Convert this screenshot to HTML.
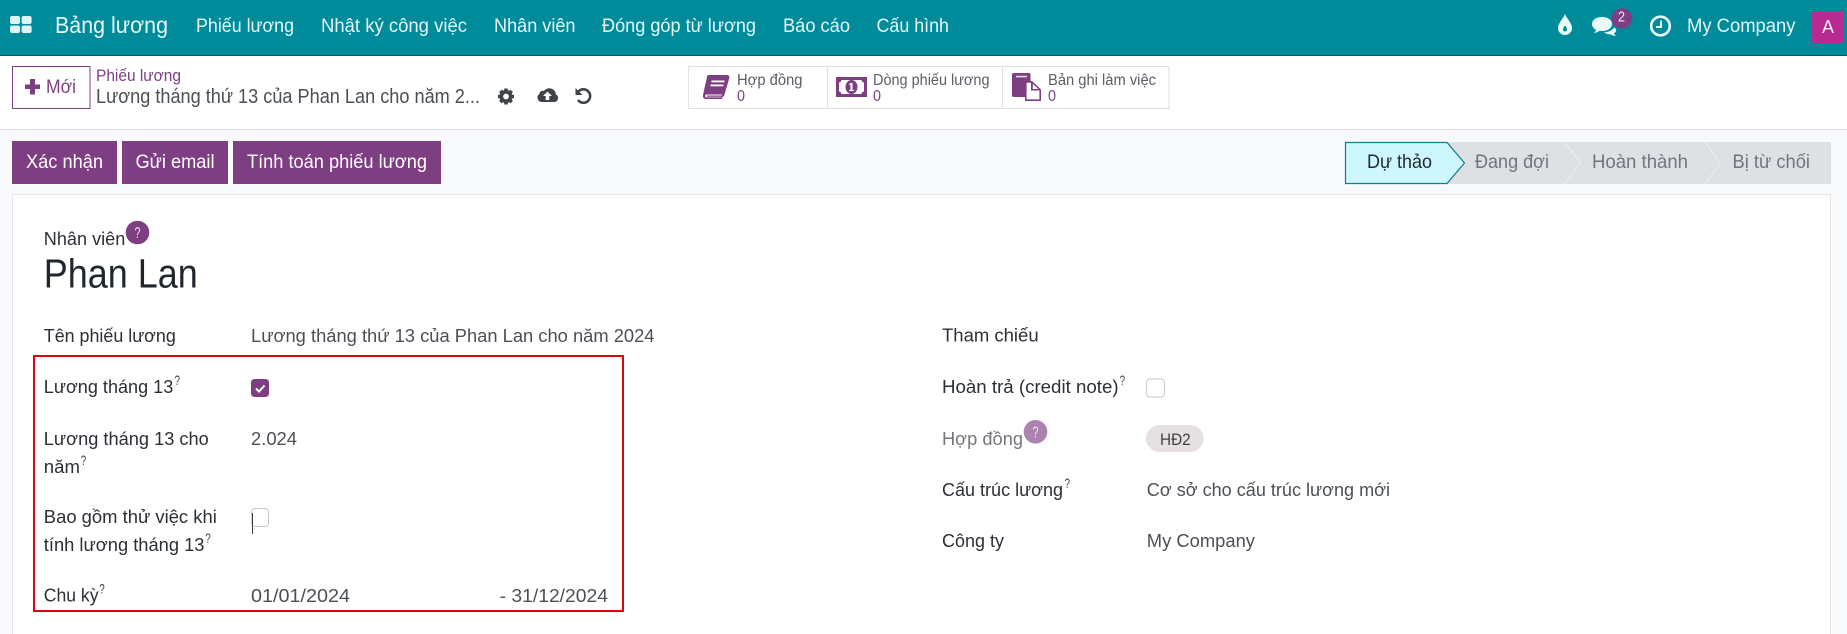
<!DOCTYPE html>
<html lang="vi">
<head>
<meta charset="utf-8">
<title>Bảng lương</title>
<style>
html,body{margin:0;padding:0;width:1847px;height:634px;overflow:hidden;background:#fff}
svg{display:block}
text{font-family:"Liberation Sans",Arimo,sans-serif;font-size:18.5px;fill:#2f343a;white-space:pre}
.nav{fill:#e6f6f7;font-size:19.5px}
.lab{fill:#2b3036}
.val{fill:#4b5057}
.btn{fill:#fff;font-size:19.5px}
.sup{font-size:14px;fill:#3d4248}
.st{font-size:15.5px;fill:#5a5f66}
.sn{font-size:16px;fill:#7d3f82}
.sb{fill:#6f7680;font-size:19.5px}
</style>
</head>
<body>
<svg xmlns="http://www.w3.org/2000/svg" width="1847" height="634" viewBox="0 0 1847 634">
<!-- backgrounds -->
<rect width="1847" height="634" fill="#f8f9fa"/>
<rect y="55" width="1847" height="74" fill="#fff"/>
<rect y="129" width="1847" height="1" fill="#dfe1e4"/>
<rect width="1847" height="55" fill="#008b9b"/>
<rect y="55" width="1847" height="1" fill="#00565d"/>
<rect x="12.5" y="194.5" width="1818" height="450" fill="#fff" stroke="#e3e5e8"/>

<!-- navbar -->
<g fill="#dff4f6">
<rect x="10" y="16" width="10" height="8" rx="2"/><rect x="21.600" y="16" width="10" height="8" rx="2"/>
<rect x="10" y="25.500" width="10" height="7.500" rx="2"/><rect x="21.600" y="25.500" width="10" height="7.500" rx="2"/>
</g>
<text class="nav" x="55" y="33" style="font-size:23.5px" textLength="113" lengthAdjust="spacingAndGlyphs">Bảng lương</text>
<text class="nav" x="196" y="32" textLength="98" lengthAdjust="spacingAndGlyphs">Phiếu lương</text>
<text class="nav" x="321" y="32" textLength="146" lengthAdjust="spacingAndGlyphs">Nhật ký công việc</text>
<text class="nav" x="494" y="32" textLength="81.500" lengthAdjust="spacingAndGlyphs">Nhân viên</text>
<text class="nav" x="602" y="32" textLength="154" lengthAdjust="spacingAndGlyphs">Đóng góp từ lương</text>
<text class="nav" x="783" y="32" textLength="67" lengthAdjust="spacingAndGlyphs">Báo cáo</text>
<text class="nav" x="876.500" y="32" textLength="72.500" lengthAdjust="spacingAndGlyphs">Cấu hình</text>

<!-- systray -->
<path d="M1565 14 C1567 19 1572 23 1572 28 A7 7 0 0 1 1558 28 C1558 23 1563 19 1565 14Z" fill="#eafafb"/>
<path d="M1565 25.500 C1566 27 1567 28 1567 29.500 A2 2 0 0 1 1563 29.500 C1563 28 1564 27 1565 25.500Z" fill="#008b9b"/>
<path d="M1602 17 C1596 17 1592 20 1592 24 C1592 26.500 1593.500 28.500 1596 29.800 C1595.800 31 1595 32 1594 33 C1596 32.800 1598 32 1599.500 30.800 C1600.300 31 1601 31 1602 31 C1608 31 1612 28 1612 24 C1612 20 1608 17 1602 17Z" fill="#eafafb"/>
<path d="M1604 32.300 C1607 32.300 1610 31.500 1612 29.800 C1613 29 1614 28 1614.500 27.500 C1616 29 1616.500 30 1616 31 C1615.500 32.300 1615 32.800 1614 33.200 C1614.500 34.500 1615.200 35.300 1616 36 C1614 36 1612 35.300 1610.500 34.300 C1608 34.500 1605.500 33.800 1604 32.300Z" fill="#eafafb"/>
<circle cx="1622" cy="18.500" r="10.300" fill="#7d3f82"/>
<text x="1618" y="21.500" textLength="7" lengthAdjust="spacingAndGlyphs" style="font-size:15px;fill:#f3e9f4">2</text>
<circle cx="1660.500" cy="26" r="9.300" fill="none" stroke="#eafafb" stroke-width="2.600"/>
<path d="M1661 20.500 V27 H1656" fill="none" stroke="#eafafb" stroke-width="2"/>
<text class="nav" x="1687" y="32" textLength="108.500" lengthAdjust="spacingAndGlyphs">My Company</text>
<rect x="1812" y="11" width="32" height="32" rx="2" fill="#b82a91"/>
<text x="1828" y="33" text-anchor="middle" style="font-size:18px;fill:#fbeef7">A</text>

<!-- control panel -->
<rect x="12.500" y="66.500" width="77.500" height="42" fill="#fff" stroke="#7d3f82"/>
<path d="M30 79 h5 v5.500 h5 v4.500 h-5 v5.500 h-5 v-5.500 h-5 v-4.500 h5z" fill="#7d3f82"/>
<text x="46" y="93" textLength="30" lengthAdjust="spacingAndGlyphs" style="font-size:19.5px;fill:#7d3f82">Mới</text>
<text x="96" y="81" textLength="85" lengthAdjust="spacingAndGlyphs" style="font-size:16.5px;fill:#7d3f82">Phiếu lương</text>
<text x="96" y="103" textLength="384" lengthAdjust="spacingAndGlyphs" style="font-size:20.5px;fill:#4a4f55">Lương tháng thứ 13 của Phan Lan cho năm 2...</text>

<!-- gear -->
<g transform="translate(506 96.500)">
<circle r="4.700" fill="none" stroke="#3f444a" stroke-width="3.600"/>
<g fill="#3f444a">
<rect x="-1.800" y="-8" width="3.600" height="4"/>
<rect x="-1.800" y="-8" width="3.600" height="4" transform="rotate(45)"/>
<rect x="-1.800" y="-8" width="3.600" height="4" transform="rotate(90)"/>
<rect x="-1.800" y="-8" width="3.600" height="4" transform="rotate(135)"/>
<rect x="-1.800" y="-8" width="3.600" height="4" transform="rotate(180)"/>
<rect x="-1.800" y="-8" width="3.600" height="4" transform="rotate(225)"/>
<rect x="-1.800" y="-8" width="3.600" height="4" transform="rotate(270)"/>
<rect x="-1.800" y="-8" width="3.600" height="4" transform="rotate(315)"/>
</g>
</g>
<!-- cloud upload -->
<path d="M541.500 102 A4.500 4.500 0 0 1 539.500 93.800 A3 3 0 0 1 543.800 91 A6.800 6.800 0 0 1 556 94.500 A4 4 0 0 1 554 102Z" fill="#3f444a"/>
<path d="M547.500 91.500 L552 96 H549.300 V100 H545.700 V96 H543 Z" fill="#fff"/>
<!-- undo -->
<path d="M578.500 91.500 A6.700 6.700 0 1 1 578 100" fill="none" stroke="#3f444a" stroke-width="2.600"/>
<path d="M575.500 88 L582.500 95 H575.500 Z" fill="#3f444a"/>

<!-- stat buttons -->
<rect x="688.500" y="66.500" width="480.500" height="42" fill="#fff" stroke="#dee2e6"/>
<rect x="827" y="66" width="1" height="42" fill="#dee2e6"/>
<rect x="1002" y="66" width="1" height="42" fill="#dee2e6"/>
<!-- book -->
<path d="M708 75 H727 C729 75 729.800 76.500 729.200 78.500 L724.500 94.500 C724 96 723.800 96.500 722.500 96.800 L722 99 H706.500 C703 99 702.500 96.500 703.200 94 L707 77 C707.200 75.800 707.500 75 708 75Z" fill="#7d3f82"/>
<path d="M706 94.500 H722 L721.700 95.500 H707.300 C706.500 95.500 706.300 96.300 707.300 96.800 H721.500 L721.300 97.400 H706.500 C704.700 97.400 704.700 95.300 706 94.500Z" fill="#fff"/>
<rect x="711.500" y="80.500" width="13" height="1.800" fill="#fff"/>
<rect x="710.500" y="84.500" width="13" height="1.800" fill="#fff"/>
<!-- money -->
<rect x="836" y="77" width="31" height="20" fill="#7d3f82"/>
<path d="M841.500 80 H861.500 A3 3 0 0 0 864 82.500 V91.500 A3 3 0 0 0 861.500 94 H841.500 A3 3 0 0 0 839 91.500 V82.500 A3 3 0 0 0 841.500 80Z" fill="#fff"/>
<ellipse cx="851.500" cy="87" rx="6" ry="7" fill="#7d3f82"/>
<path d="M850.500 83 H852.500 V90 H854 V91 H849 V90 H850.500 V84.500 L849.300 85.200 V84Z" fill="#fff"/>
<!-- doc -->
<path d="M1012 74.500 A1.500 1.500 0 0 1 1013.500 73 H1029 A1.500 1.500 0 0 1 1030.500 74.500 V83 H1026 V97 H1013.500 A1.500 1.500 0 0 1 1012 95.500Z" fill="#7d3f82"/>
<rect x="1016" y="75.800" width="11" height="1.600" fill="#fff" opacity=".8"/>
<path d="M1025 81 H1032 L1041 89.500 V101 H1025Z" fill="#7d3f82"/>
<path d="M1026.600 82.800 H1031 V90.500 H1039.400 V99.400 H1026.600Z" fill="#fff"/>
<path d="M1032.800 84 L1038.500 89 H1032.800Z" fill="#fff"/>

<text class="st" x="737" y="85" textLength="65.500" lengthAdjust="spacingAndGlyphs">Hợp đồng</text>
<text class="sn" x="737" y="101" textLength="8" lengthAdjust="spacingAndGlyphs">0</text>
<text class="st" x="873" y="85" textLength="116.500" lengthAdjust="spacingAndGlyphs">Dòng phiếu lương</text>
<text class="sn" x="873" y="101" textLength="8" lengthAdjust="spacingAndGlyphs">0</text>
<text class="st" x="1048" y="85" textLength="108" lengthAdjust="spacingAndGlyphs">Bản ghi làm việc</text>
<text class="sn" x="1048" y="101" textLength="8" lengthAdjust="spacingAndGlyphs">0</text>

<!-- action buttons -->
<rect x="12" y="141" width="105" height="43" fill="#7d3f82"/>
<rect x="122" y="141" width="106" height="43" fill="#7d3f82"/>
<rect x="233" y="141" width="208" height="43" fill="#7d3f82"/>
<text class="btn" x="26" y="168" textLength="77" lengthAdjust="spacingAndGlyphs">Xác nhận</text>
<text class="btn" x="135.500" y="168" textLength="79" lengthAdjust="spacingAndGlyphs">Gửi email</text>
<text class="btn" x="247" y="168" textLength="180" lengthAdjust="spacingAndGlyphs">Tính toán phiếu lương</text>

<!-- status bar -->
<rect x="1440" y="142" width="391" height="42" fill="#dee0e4"/>
<path d="M1564.500 142 L1580.500 163 L1564.500 184" fill="none" stroke="#e9ebed" stroke-width="1.200"/>
<path d="M1704.500 142 L1720.500 163 L1704.500 184" fill="none" stroke="#e9ebed" stroke-width="1.200"/>
<path d="M1345.500 142.500 H1447 L1464.500 163 L1447 183.500 H1345.500Z" fill="#cdf7fd" stroke="#0f7f8a" stroke-width="1.200"/>
<text x="1367" y="168" textLength="65" lengthAdjust="spacingAndGlyphs" style="font-size:19.5px;fill:#1f2a33">Dự thảo</text>
<text class="sb" x="1475" y="168" textLength="74" lengthAdjust="spacingAndGlyphs">Đang đợi</text>
<text class="sb" x="1592" y="168" textLength="96" lengthAdjust="spacingAndGlyphs">Hoàn thành</text>
<text class="sb" x="1732.500" y="168" textLength="77.500" lengthAdjust="spacingAndGlyphs">Bị từ chối</text>

<!-- title -->
<text x="43.800" y="245" textLength="81.500" lengthAdjust="spacingAndGlyphs" class="lab">Nhân viên</text>
<circle cx="137.500" cy="232.500" r="11.800" fill="#7d3f82"/>
<text x="134.500" y="238" textLength="6" lengthAdjust="spacingAndGlyphs" style="font-size:16px;fill:#eadcec">?</text>
<text x="43.800" y="287.300" textLength="154" lengthAdjust="spacingAndGlyphs" style="font-size:41px;fill:#1f262d">Phan Lan</text>

<!-- left column -->
<text class="lab" x="43.800" y="342" textLength="132" lengthAdjust="spacingAndGlyphs">Tên phiếu lương</text>
<text class="val" x="251" y="342" textLength="403.500" lengthAdjust="spacingAndGlyphs">Lương tháng thứ 13 của Phan Lan cho năm 2024</text>

<text class="lab" x="43.800" y="393" textLength="129.500" lengthAdjust="spacingAndGlyphs">Lương tháng 13</text>
<text class="sup" x="174.500" y="385" textLength="5.500" lengthAdjust="spacingAndGlyphs">?</text>
<rect x="251" y="379" width="18" height="18" rx="3.500" fill="#7d3f82"/>
<path d="M256 388.500 L259 391.500 L264.500 385.500" fill="none" stroke="#fff" stroke-width="2"/>

<text class="lab" x="43.800" y="445" textLength="165" lengthAdjust="spacingAndGlyphs">Lương tháng 13 cho</text>
<text class="lab" x="43.800" y="473" textLength="36.200" lengthAdjust="spacingAndGlyphs">năm</text>
<text class="sup" x="80.800" y="465" textLength="5.500" lengthAdjust="spacingAndGlyphs">?</text>
<text class="val" x="251" y="445" textLength="46" lengthAdjust="spacingAndGlyphs">2.024</text>

<text class="lab" x="43.800" y="523" textLength="173" lengthAdjust="spacingAndGlyphs">Bao gồm thử việc khi</text>
<text class="lab" x="43.800" y="551" textLength="160.700" lengthAdjust="spacingAndGlyphs">tính lương tháng 13</text>
<text class="sup" x="205.300" y="543" textLength="5.500" lengthAdjust="spacingAndGlyphs">?</text>
<rect x="251.500" y="508.500" width="17" height="18" rx="3.500" fill="#fff" stroke="#c6cace"/>
<rect x="252" y="513" width="1" height="21" fill="#3b3f45"/>

<text class="lab" x="43.800" y="601.500" textLength="54.700" lengthAdjust="spacingAndGlyphs">Chu kỳ</text>
<text class="sup" x="99.300" y="593.500" textLength="5.500" lengthAdjust="spacingAndGlyphs">?</text>
<text class="val" x="251" y="602" textLength="99" lengthAdjust="spacingAndGlyphs">01/01/2024</text>
<text class="val" x="499.600" y="602" textLength="108.400" lengthAdjust="spacingAndGlyphs">- 31/12/2024</text>

<!-- red box -->
<rect x="34" y="356" width="589" height="255" fill="none" stroke="#d7090f" stroke-width="2"/>

<!-- right column -->
<text class="lab" x="942" y="341.700" textLength="96.600" lengthAdjust="spacingAndGlyphs">Tham chiếu</text>
<text class="lab" x="942" y="393" textLength="176.600" lengthAdjust="spacingAndGlyphs">Hoàn trả (credit note)</text>
<text class="sup" x="1119.600" y="385" textLength="5.500" lengthAdjust="spacingAndGlyphs">?</text>
<rect x="1146.500" y="379" width="18" height="18" rx="3.500" fill="#fff" stroke="#c6cace"/>

<text x="942" y="445" textLength="81" lengthAdjust="spacingAndGlyphs" style="fill:#73777d">Hợp đồng</text>
<circle cx="1035.500" cy="431.800" r="11.800" fill="#ab82b0"/>
<text x="1032.500" y="437.500" textLength="6" lengthAdjust="spacingAndGlyphs" style="font-size:16px;fill:#f0e6f1">?</text>
<rect x="1146" y="425" width="57.600" height="27" rx="13.500" fill="#e6e0e0"/>
<text x="1160" y="445" textLength="30.700" lengthAdjust="spacingAndGlyphs" style="font-size:17px;fill:#3c4147">HĐ2</text>

<text class="lab" x="942" y="496" textLength="121" lengthAdjust="spacingAndGlyphs">Cấu trúc lương</text>
<text class="sup" x="1064.500" y="488" textLength="5.500" lengthAdjust="spacingAndGlyphs">?</text>
<text class="val" x="1146.800" y="496" textLength="243.200" lengthAdjust="spacingAndGlyphs">Cơ sở cho cấu trúc lương mới</text>

<text class="lab" x="942" y="547" textLength="62" lengthAdjust="spacingAndGlyphs">Công ty</text>
<text class="val" x="1146.800" y="547" textLength="108.200" lengthAdjust="spacingAndGlyphs">My Company</text>
</svg>
</body>
</html>
